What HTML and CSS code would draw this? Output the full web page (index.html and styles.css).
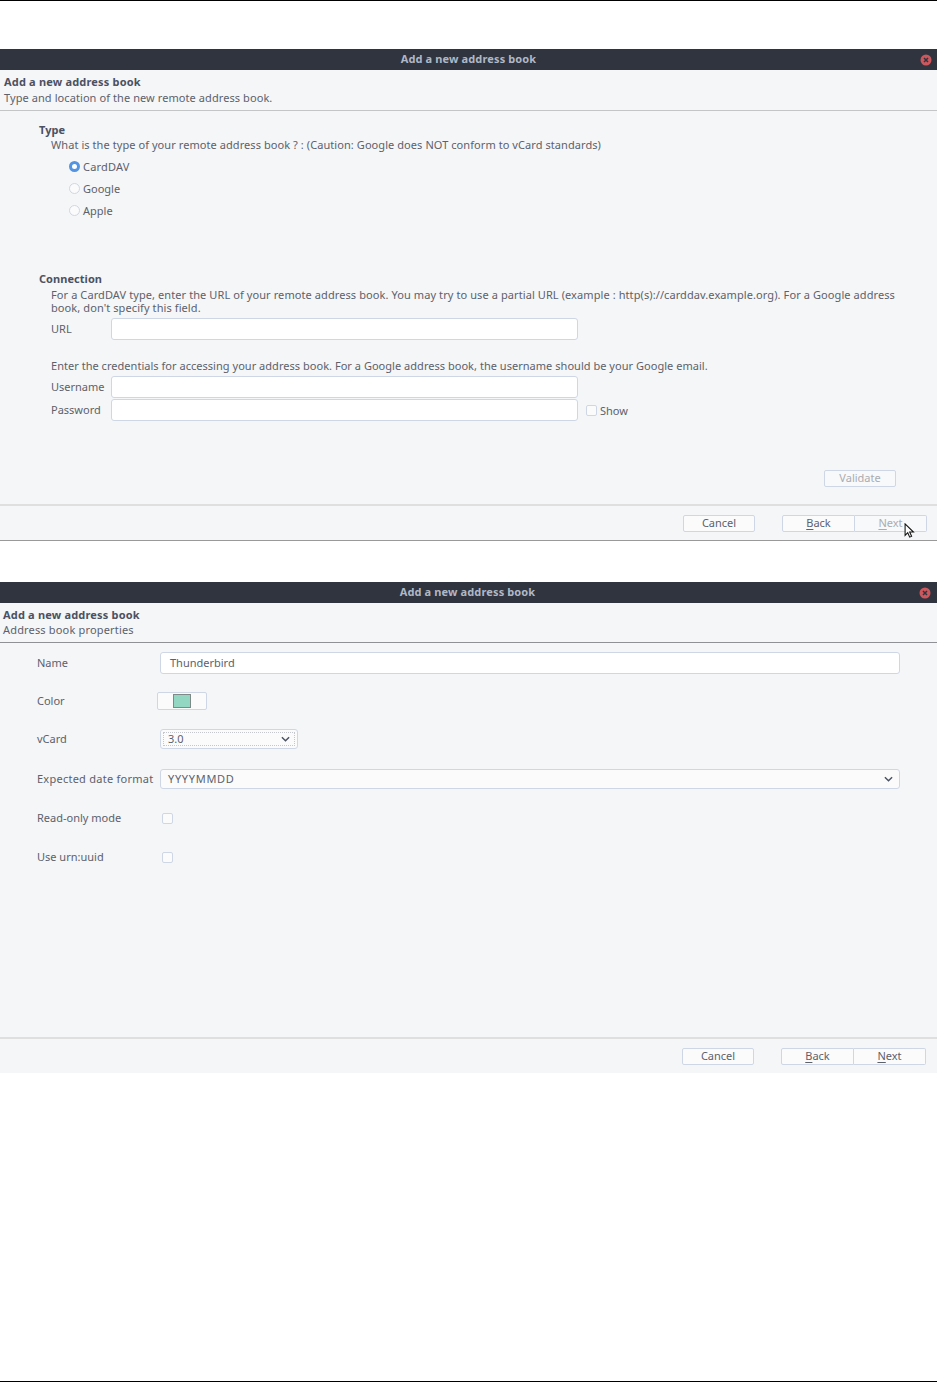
FILE: index.html
```html
<!DOCTYPE html>
<html lang="en">
<head>
<meta charset="utf-8">
<title>Add a new address book</title>
<link rel="stylesheet" href="styles.css">
</head>
<body>
<main class="page">
  <section class="window window-first">
    <div class="titlebar">
      <span class="title">Add a new address book</span>
      <svg class="close" viewBox="0 0 12 12"><circle cx="6" cy="6" r="5.5" fill="#cc575d"/><path d="M4 4l4 4M8 4l-4 4" stroke="#2f343f" stroke-width="1.5" fill="none"/></svg>
    </div>
    <header class="head">
      <div class="head-title">Add a new address book</div>
      <div class="head-sub">Type and location of the new remote address book.</div>
    </header>
    <div class="content wizard">
      <div class="group-title type-title">Type</div>
      <p class="text">What is the type of your remote address book ? : (Caution: Google does NOT conform to vCard standards)</p>
      <div class="radios">
        <div class="radio-row"><span class="radio on"></span><span class="radio-card">CardDAV</span></div>
        <div class="radio-row"><span class="radio"></span><span>Google</span></div>
        <div class="radio-row"><span class="radio"></span><span>Apple</span></div>
      </div>
      <div class="group-title conn-title">Connection</div>
      <p class="text wrap">For a CardDAV type, enter the URL of your remote address book. You may try to use a partial URL (example : http(s)://carddav.example.org). For a Google address book, don't specify this field.</p>
      <div class="field-row url-row"><label class="flabel">URL</label><div class="input"></div></div>
      <p class="text cred">Enter the credentials for accessing your address book. For a Google address book, the username should be your Google email.</p>
      <div class="field-row user-row"><label class="flabel">Username</label><div class="input"></div></div>
      <div class="field-row pass-row"><label class="flabel">Password</label><div class="input"></div><span class="check show-check"></span><span class="show-label">Show</span></div>
      <div class="validate-row"><span class="btn disabled validate">Validate</span></div>
    </div>
    <footer class="foot">
      <span class="btn">Cancel</span>
      <span class="btn back"><u>B</u>ack</span>
      <span class="btn next disabled"><u>N</u>ext</span>
      <svg class="cursor" viewBox="0 0 12 17"><path d="M1 1v13l3-3 2.2 5 2.2-1-2.2-4.800h4.300z" fill="#fff" stroke="#111" stroke-width="1.200"/></svg>
    </footer>
  </section>

  <section class="window window-second">
    <div class="titlebar">
      <span class="title">Add a new address book</span>
      <svg class="close" viewBox="0 0 12 12"><circle cx="6" cy="6" r="5.5" fill="#cc575d"/><path d="M4 4l4 4M8 4l-4 4" stroke="#2f343f" stroke-width="1.5" fill="none"/></svg>
    </div>
    <header class="head head-second">
      <div class="head-title">Add a new address book</div>
      <div class="head-sub">Address book properties</div>
    </header>
    <div class="content props">
      <label class="plabel">Name</label>
      <div class="input value name-input">Thunderbird</div>
      <label class="plabel">Color</label>
      <div class="color-btn"><span class="swatch"></span></div>
      <label class="plabel">vCard</label>
      <div class="select vcard"><span class="select-focus"><span class="select-text">3.0</span><svg class="chev" viewBox="0 0 10 6"><path d="M1 1l4 4 4-4" stroke="#4b5162" stroke-width="1.600" fill="none"/></svg></span></div>
      <label class="plabel date-label">Expected date format</label>
      <div class="select date"><span class="select-text date-value">YYYYMMDD</span><svg class="chev" viewBox="0 0 10 6"><path d="M1 1l4 4 4-4" stroke="#4b5162" stroke-width="1.600" fill="none"/></svg></div>
      <label class="plabel">Read-only mode</label>
      <span class="check prop-check"></span>
      <label class="plabel">Use urn:uuid</label>
      <span class="check prop-check"></span>
    </div>
    <footer class="foot">
      <span class="btn">Cancel</span>
      <span class="btn back"><u>B</u>ack</span>
      <span class="btn next"><u>N</u>ext</span>
    </footer>
  </section>
</main>
</body>
</html>
```

FILE: styles.css
```css
* { box-sizing: border-box; }
html, body { margin: 0; padding: 0; background: #fff; }
body {
  font-family: "Noto Sans", "Open Sans", "Liberation Sans", sans-serif;
  font-size: 11px;
  color: #5c616c;
}
.page {
  height: 1382px;
  border-top: 1px solid #000;
  border-bottom: 1px solid #000;
  padding-top: 48px;
  display: flex;
  flex-direction: column;
}
.window {
  background: #f5f6f7;
  display: flex;
  flex-direction: column;
  position: relative;
}
.window-first { height: 492px; border-bottom: 1px solid #999; }
.window-second { height: 491px; margin-top: 41px; margin-left: -1px; width: 938px; }
.titlebar {
  height: 21px;
  flex: none;
  background: #2f343f;
  display: flex;
  align-items: center;
  justify-content: center;
  padding-bottom: 2px;
  position: relative;
}
.title { color: #afb8c6; font-weight: 700; font-size: 11px; letter-spacing: 0.13px; }
.close { position: absolute; right: 5.5px; top: 4.5px; width: 12px; height: 12px; }
.window-second .close { right: 6.5px; }
.window-second .titlebar { padding-right: 1px; padding-bottom: 3px; }
.head {
  height: 41px;
  flex: none;
  border-bottom: 1px solid #c4c5c7;
  padding: 4px 0 0 4px;
  line-height: 16px;
}
.head-second { border-bottom-color: #8f9194; height: 40px; padding-top: 3.5px; }
.head-second .head-sub { letter-spacing: 0.17px; margin-top: -0.5px; }
.head-title { font-weight: 700; color: #4b5162; letter-spacing: 0.18px; }
.head-sub { letter-spacing: 0.08px; }
.content { flex: 1; min-height: 0; }
.wizard { padding-left: 39px; }
.group-title { font-weight: 700; line-height: 15px; color: #4b5162; letter-spacing: 0.05px; }
.type-title { margin-top: 11px; }
.text { margin: 0 0 0 12px; line-height: 13px; color: #5c616c; letter-spacing: 0.07px; }
.wizard > .text:first-of-type { margin-top: 1px; }
.radios { margin: 4px 0 0 30px; }
.radio-row { display: flex; align-items: center; gap: 3px; height: 22px; }
.radio {
  width: 11px; height: 11px; border-radius: 50%;
  border: 1px solid #cfd6e6; background: #fbfbfc;
}
.radio.on { background: #fff; border: 3px solid #5294e2; }
.radio-card { letter-spacing: 0.2px; }
.conn-title { margin-top: 50px; }
.wrap { margin-top: 2px; width: 860px; letter-spacing: 0.09px; }
.field-row { display: flex; align-items: center; margin-left: 12px; }
.flabel { width: 60px; flex: none; padding-bottom: 1px; }
.input {
  width: 467px; height: 22px; flex: none;
  background: #fff; border: 1px solid #cfd6e6; border-radius: 3px;
}
.url-row { margin-top: 4px; }
.cred { margin-top: 18.5px; letter-spacing: 0.03px; }
.user-row { margin-top: 4.5px; }
.pass-row { margin-top: 1px; }
.check {
  width: 11px; height: 11px; display: block;
  background: #fbfbfc; border: 1px solid #cfd6e6; border-radius: 2px;
}
.show-check { margin-left: 8px; }
.show-label { margin-left: 3px; }
.validate-row { display: flex; justify-content: flex-end; padding-right: 41px; margin-top: 49px; }
.btn {
  width: 72px; height: 17px;
  display: flex; align-items: center; justify-content: center;
  background: #fbfbfc; border: 1px solid #cfd6e6; border-radius: 2px;
  color: #5c616c;
  padding-bottom: 2px;
}
.btn u { text-decoration-thickness: 1px; text-underline-offset: 2px; }
.disabled { color: #a9acb2; background: #f8f9fa; }
.foot {
  height: 36px; flex: none;
  border-top: 2px solid #dfdfe0;
  display: flex; align-items: flex-start;
  padding: 9px 10px 0 0;
  justify-content: flex-end;
  position: relative;
}
.window-second .foot { padding-right: 11px; }
.back { margin-left: 27px; width: 73px; border-radius: 2px 0 0 2px; }
.next { margin-left: 0; border-left: 0; border-radius: 0 2px 2px 0; }
.cursor { position: absolute; right: 22px; top: 17px; width: 11px; height: 15px; }
.props {
  display: grid;
  grid-template-columns: 123px 1fr;
  grid-template-rows: 38px 38px 38px 42px 36px 42px;
  padding: 1px 37px 0 38px;
  align-items: center;
  justify-items: start;
}
.plabel { color: #5c616c; padding-bottom: 1px; }
.date-label { letter-spacing: 0.25px; }
.date-value { letter-spacing: 0.7px; }
.select-text { padding-bottom: 1px; }
.value { display: flex; align-items: center; padding: 0 0 1px 9px; color: #5c616c; }
.name-input { width: 740px; }
.color-btn {
  margin-left: -3px;
  width: 50px; height: 18px;
  display: flex; align-items: center; justify-content: center;
  background: #fbfbfc; border: 1px solid #cfd6e6; border-radius: 2px;
}
.swatch { width: 18px; height: 14px; background: #93d7c2; border: 1px solid #7f8a88; }
.select {
  height: 20px; display: flex; align-items: center; justify-content: space-between;
  background: #fbfbfc; border: 1px solid #cfd6e6; border-radius: 3px;
}
.vcard { width: 138px; padding: 2px; }
.select-focus {
  flex: 1; height: 100%; display: flex; align-items: center; justify-content: space-between;
  border: 1px dotted #c4c7cd; padding: 0 4px 0 4px;
}
.date { width: 740px; padding: 0 6px 0 7px; }
.chev { width: 9px; height: 6px; display: block; }
.prop-check { margin-left: 2px; }
```
